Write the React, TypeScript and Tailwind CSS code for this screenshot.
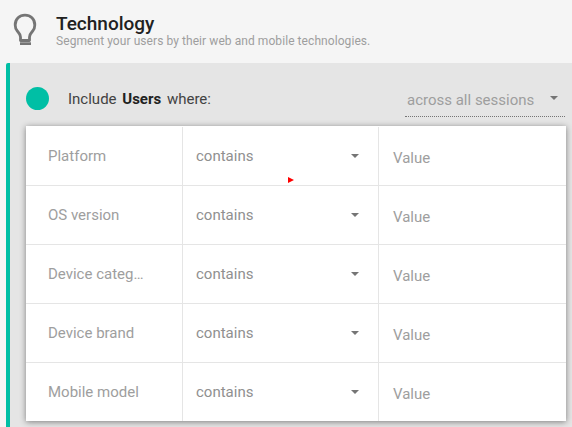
const rows = ["Platform", "OS version", "Device categ…", "Device brand", "Mobile model"];

function Caret() {
  return <span className="w-0 h-0 border-l-[4px] border-r-[4px] border-t-[4px] border-l-transparent border-r-transparent border-t-[#757575]" />;
}

export default function App() {
  return (
    <div className="relative w-[572px] h-[427px] overflow-hidden bg-[#f5f5f5] font-['Roboto',sans-serif]">
      <header className="h-[63px] flex items-start pl-[13px] pt-[13px]">
        <svg width="26" height="34" viewBox="0 0 26 34" fill="none" className="shrink-0">
          <path d="M7.5 27.5 V24 C7.5 21.5 6 20 4.3 18 C2.7 16.2 2.2 14.3 2.2 12 C2.2 6 6.5 2.2 12 2.2 C17.5 2.2 21.8 6 21.8 12 C21.8 14.3 21.3 16.2 19.7 18 C18 20 16.5 21.5 16.5 24 V27.5 Z" stroke="#757575" strokeWidth="2.8" strokeLinejoin="round" />
          <rect x="7" y="29.3" width="11" height="2.7" fill="#757575" />
        </svg>
        <div className="ml-[17px] flex flex-col">
          <h1 className="text-[19px] leading-[21px] font-medium text-[#212121]">Technology</h1>
          <p className="text-[12px] leading-[14px] text-[#9e9e9e] tracking-[0.07px]">Segment your users by their web and mobile technologies.</p>
        </div>
      </header>
      <section className="ml-[6px] h-[364px] border-l-[4px] border-[#00bfa5] bg-[#e5e5e5] rounded-tl-[2px] pl-[16px] pr-[6px]">
        <div className="h-[63px] flex items-start">
          <span className="mt-[24px] w-[23px] h-[23px] rounded-full bg-[#00bfa5] shrink-0" />
          <p className="ml-[19px] mt-[27px] text-[15px] leading-[18px] text-[#424242]">
            Include <b className="ml-[2px] mr-[2px] font-bold text-[#212121]">Users</b> where:
          </p>
          <div className="ml-auto mt-[27px] mr-[1px] w-[160px] h-[27px] border-b border-dotted border-[#757575] flex items-start justify-between pl-[2px] pr-[7px]">
            <span className="text-[15px] leading-[20px] text-[#9e9e9e]">across all sessions</span>
            <span className="mt-[6px] flex"><Caret /></span>
          </div>
        </div>
        <div className="bg-white h-[295px] pt-[1px] shadow-[0_1px_6px_rgba(0,0,0,0.45)] flex flex-col">
          {rows.map((r, i) => (
            <div key={r} className={`flex ${i < 4 ? "h-[59px] border-b border-[#e5e5e5]" : "h-[58px]"}`}>
              <div className="w-[157px] border-r border-[#e5e5e5] pl-[22px] pt-[20px] text-[15px] leading-[18px] text-[#9e9e9e]">{r}</div>
              <div className="w-[196px] border-r border-[#e5e5e5] pl-[13px] pr-[19px] pt-[20px] flex items-start justify-between">
                <span className="text-[15px] leading-[18px] text-[#909090]">contains</span>
                <span className="mt-[7px] flex"><Caret /></span>
              </div>
              <div className="pl-[14px] pt-[22px] text-[15px] leading-[18px] text-[#9e9e9e]">Value</div>
            </div>
          ))}
        </div>
      </section>
      <svg width="7" height="6" viewBox="0 0 7 6" className="absolute left-[288px] top-[177px]">
        <path d="M0 0 L6 3 L0 6 Z" fill="#f00" />
      </svg>
    </div>
  );
}
